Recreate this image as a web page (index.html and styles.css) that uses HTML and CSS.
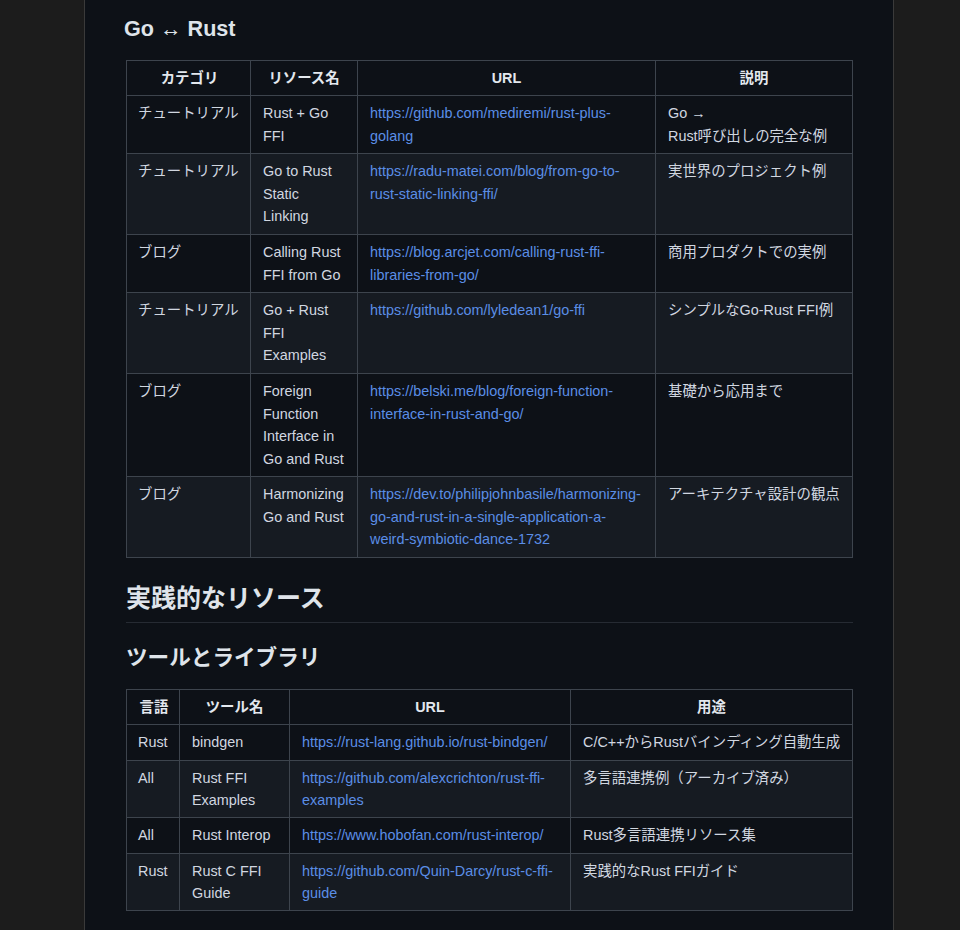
FILE: index.html
```html
<!DOCTYPE html>
<html lang="ja">
<head>
<meta charset="utf-8">
<title>Go ↔ Rust</title>
<link rel="stylesheet" href="styles.css">
</head>
<body>
<div class="page">
  <main class="article">
    <h3 class="h3 first">Go ↔ Rust</h3>
    <table class="tbl tbl-go">
      <colgroup>
        <col class="g1"><col class="g2"><col class="g3"><col class="g4">
      </colgroup>
      <thead>
        <tr><th>カテゴリ</th><th>リソース名</th><th>URL</th><th>説明</th></tr>
      </thead>
      <tbody>
        <tr><td>チュートリアル</td><td>Rust + Go FFI</td><td><a href="#">https://github.com/mediremi/rust-plus-golang</a></td><td>Go → Rust呼び出しの完全な例</td></tr>
        <tr><td>チュートリアル</td><td>Go to Rust Static Linking</td><td><a href="#">https://radu-matei.com/blog/from-go-to-rust-static-linking-ffi/</a></td><td>実世界のプロジェクト例</td></tr>
        <tr><td>ブログ</td><td>Calling Rust FFI from Go</td><td><a href="#">https://blog.arcjet.com/calling-rust-ffi-libraries-from-go/</a></td><td>商用プロダクトでの実例</td></tr>
        <tr><td>チュートリアル</td><td>Go + Rust FFI Examples</td><td><a href="#">https://github.com/lyledean1/go-ffi</a></td><td>シンプルなGo-Rust FFI例</td></tr>
        <tr><td>ブログ</td><td>Foreign Function Interface in Go and Rust</td><td><a href="#">https://belski.me/blog/foreign-function-interface-in-rust-and-go/</a></td><td>基礎から応用まで</td></tr>
        <tr><td>ブログ</td><td>Harmonizing Go and Rust</td><td><a href="#">https://dev.to/philipjohnbasile/harmonizing-go-and-rust-in-a-single-application-a-weird-symbiotic-dance-1732</a></td><td>アーキテクチャ設計の観点</td></tr>
      </tbody>
    </table>

    <h2 class="h2">実践的なリソース</h2>
    <h3 class="h3">ツールとライブラリ</h3>
    <table class="tbl tbl-tools">
      <colgroup>
        <col class="t1"><col class="t2"><col class="t3"><col class="t4">
      </colgroup>
      <thead>
        <tr><th>言語</th><th>ツール名</th><th>URL</th><th>用途</th></tr>
      </thead>
      <tbody>
        <tr><td>Rust</td><td>bindgen</td><td><a href="#">https://rust-lang.github.io/rust-bindgen/</a></td><td>C/C++からRustバインディング自動生成</td></tr>
        <tr><td>All</td><td>Rust FFI Examples</td><td><a href="#">https://github.com/alexcrichton/rust-ffi-examples</a></td><td>多言語連携例（アーカイブ済み）</td></tr>
        <tr><td>All</td><td>Rust Interop</td><td><a href="#">https://www.hobofan.com/rust-interop/</a></td><td>Rust多言語連携リソース集</td></tr>
        <tr><td>Rust</td><td>Rust C FFI Guide</td><td><a href="#">https://github.com/Quin-Darcy/rust-c-ffi-guide</a></td><td>実践的なRust FFIガイド</td></tr>
      </tbody>
    </table>
  </main>
</div>
</body>
</html>
```

FILE: styles.css
```css
html, body {
  margin: 0;
  padding: 0;
  background: #1c1c1c;
}

body {
  font-family: "Liberation Sans", Arial, "Noto Sans CJK JP", sans-serif;
  color: #d1d7e0;
}

.page {
  height: 930px;
  overflow: hidden;
}

.article {
  margin-left: 84px;
  width: 727px;
  min-height: 930px;
  padding: 16px 40px 0 41px;
  background: #0d1117;
  border-left: 1px solid #3a3a3a;
  border-right: 1px solid #3a3a3a;
  box-sizing: content-box;
}

.h2,
.h3 {
  font-family: "Liberation Sans", Arial, "Noto Sans CJK JP", sans-serif;
  font-weight: 700;
  color: #dfe4ea;
  line-height: 1.25;
}

.h3 {
  font-size: 21.6px;
  margin: 22px 0 17px;
}

.h3.first {
  margin-top: 0;
  margin-left: -2px;
}

.h2 {
  font-size: 25px;
  margin: 25px 0 0;
  padding-bottom: 8px;
  border-bottom: 1px solid #262b33;
}

.tbl {
  table-layout: fixed;
  width: 726px;
  border-collapse: collapse;
  border-spacing: 0;
  font-size: 14.4px;
  margin: 0;
}

.tbl-go { line-height: 22.6px; }
.tbl-tools { line-height: 22.3px; }

.g1 { width: 124px; }
.g2 { width: 107px; }
.g3 { width: 298px; }
.g4 { width: 197px; }

.t1 { width: 53px; }
.t2 { width: 110px; }
.t3 { width: 281px; }
.t4 { width: 282px; }

.tbl th,
.tbl td {
  border: 1px solid #3d444d;
  padding: 6px 12px;
  vertical-align: top;
  word-break: keep-all;
  overflow-wrap: break-word;
}

.tbl th:first-child,
.tbl td:first-child {
  padding-left: 11px;
  padding-right: 9px;
}

.tbl td:last-child {
  padding-right: 6px;
}

.tbl td a {
  word-break: normal;
}

.tbl th {
  font-weight: 700;
  line-height: 22px;
  text-align: center;
  color: #e3e8ee;
}

.tbl td {
  text-align: left;
}

.tbl tbody tr {
  background: #0d1117;
}

.tbl tbody tr:nth-child(2n) {
  background: #161b22;
}

.tbl a {
  color: #5b8ee6;
  text-decoration: none;
}
```
